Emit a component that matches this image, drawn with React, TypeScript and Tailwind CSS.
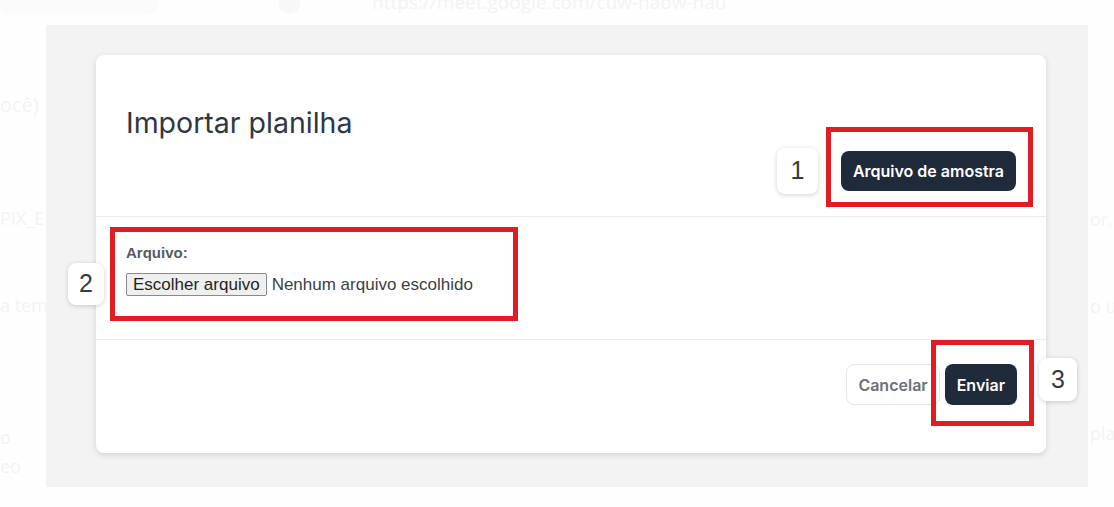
import type { ReactNode } from "react";

const Marker = ({ n, className }: { n: string; className: string }) => (
  <div
    className={`absolute flex items-center justify-center rounded-lg bg-white text-[25px] text-[#3a3a3a] shadow-[0_1px_5px_rgba(0,0,0,0.18)] font-['Liberation_Sans',Arial,sans-serif] ${className}`}
  >
    {n}
  </div>
);

const RedBox = ({ className }: { className: string }) => (
  <div className={`pointer-events-none absolute border-[5px] border-[#e21c23] ${className}`} />
);

const Faint = ({ children, className = "" }: { children: ReactNode; className?: string }) => (
  <div className={className}>{children}</div>
);

const App = () => {
  return (
    <div className="relative h-[507px] w-[1114px] overflow-hidden bg-[#fefefe] font-['Inter',sans-serif]">
      {/* faded page behind the modal */}
      <div className="flex h-full whitespace-nowrap font-['Open_Sans',sans-serif] text-[18px] text-[#f3f3f3]">
        <div className="flex w-[300px] flex-col">
          <div className="flex items-start gap-[122px]">
            <div className="h-[15px] w-[190px] rounded-b-lg bg-[#fbfbfb]" />
            <div className="-mt-[12px] h-[26px] w-[26px] rounded-full bg-[#f8f8f8]" />
          </div>
          <Faint className="mt-[75px] text-[20px]">ocê)</Faint>
          <Faint className="mt-[85px]">PIX_E</Faint>
          <Faint className="mt-[60px]">a tem a</Faint>
          <Faint className="mt-[105px]">o</Faint>
          <Faint className="mt-[2px]">eo</Faint>
        </div>
        <div className="flex-1 pl-[72px]">
          <Faint className="-mt-[12px] text-[19px]">https://meet.google.com/cuw-naow-nau</Faint>
        </div>
        <div className="flex w-[24px] flex-col overflow-hidden">
          <Faint className="mt-[206px]">or, c</Faint>
          <Faint className="mt-[60px]">o u</Faint>
          <Faint className="mt-[100px]">plan</Faint>
        </div>
      </div>

      {/* modal overlay */}
      <div className="absolute left-[46px] top-[25px] h-[462px] w-[1042px] bg-[#f3f3f3] pl-[50px] pt-[30px]">
        <div className="w-[950px] rounded-lg bg-white shadow-[0_2px_6px_rgba(0,0,0,0.13)]">
          {/* header */}
          <div className="flex flex-col border-b border-[#ececec] px-[30px] pb-[25px] pt-[51px]">
            <h1 className="text-[28.5px] leading-[34px] font-normal text-[#2f3744]">
              Importar planilha
            </h1>
            <div className="mt-[11px] flex justify-end">
              <div className="relative">
                <button className="h-[40px] rounded-lg bg-[#1f2a3b] px-3 text-[16px] font-semibold text-white">
                  Arquivo de amostra
                </button>
                <RedBox className="-bottom-[16px] -left-[15px] -right-[17px] -top-[24px]" />
                <Marker n="1" className="-left-[64px] -top-[3px] h-[46px] w-[41px]" />
              </div>
            </div>
          </div>

          {/* body */}
          <div className="border-b border-[#ececec] px-[30px] pb-[43px] pt-[27px] font-['Liberation_Sans',Arial,sans-serif]">
            <div className="relative w-[360px]">
              <label className="block text-[15px] leading-[18px] font-bold text-[#555b63]">
                Arquivo:
              </label>
              <div className="mt-[11px] flex h-[23px] items-center">
                <span className="flex h-[23px] items-center rounded-[2px] border border-[#8a8a8a] bg-[#efefef] px-[6px] text-[17px] text-[#1f1f1f]">
                  Escolher arquivo
                </span>
                <span className="ml-[5px] text-[17px] text-[#3a3f47]">Nenhum arquivo escolhido</span>
              </div>
              <RedBox className="-left-[16px] -top-[17px] h-[94px] w-[408px]" />
              <Marker n="2" className="-left-[58px] top-[19px] h-[42px] w-[36px]" />
            </div>
          </div>

          {/* footer */}
          <div className="flex justify-end gap-[5px] px-[29px] pb-[48px] pt-[24px]">
            <button className="h-[41px] rounded-lg border border-[#e4e6ea] bg-white px-[11px] text-[16px] font-semibold text-[#6b7079]">
              Cancelar
            </button>
            <div className="relative">
              <button className="h-[41px] rounded-lg bg-[#1f2a3b] px-3 text-[16px] font-semibold text-white">
                Enviar
              </button>
              <RedBox className="-bottom-[21px] -left-[14px] -right-[17px] -top-[24px]" />
              <Marker n="3" className="-right-[60px] -top-[6px] h-[43px] w-[38px]" />
            </div>
          </div>
        </div>
      </div>
    </div>
  );
};

export default App;
